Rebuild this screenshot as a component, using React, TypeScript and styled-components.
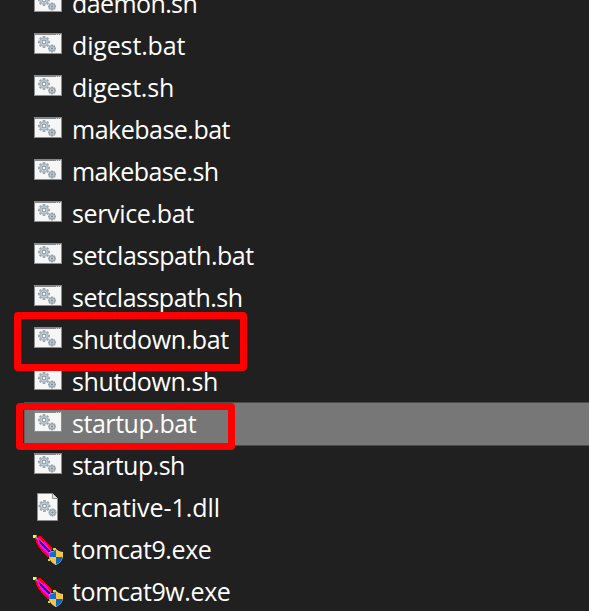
import React from "react";
import styled, { createGlobalStyle } from "styled-components";

const GlobalStyle = createGlobalStyle`
  html, body { margin: 0; padding: 0; background: #202020; overflow: hidden; }
`;

const Explorer = styled.main`
  position: relative;
  width: 589px;
  height: 611px;
  overflow: hidden;
  background: #202020;
  font-family: "Open Sans", "Noto Sans", sans-serif;
`;

const FileList = styled.ul`
  list-style: none;
  margin: -17px 0 0;
  padding: 0 0 0 24px;
`;

const FileRow = styled.li<{ $selected?: boolean }>`
  box-sizing: border-box;
  display: flex;
  align-items: flex-start;
  gap: 10px;
  height: 42px;
  padding-left: 10px;
  background: ${(p) => (p.$selected ? "#777777" : "transparent")};
  box-shadow: ${(p) => (p.$selected ? "0 -1px 0 #4b4b4b, 0 1px 0 #4b4b4b, inset 1px 0 0 #606060" : "none")};
`;

const IconSlot = styled.span`
  flex: none;
  width: 28px;
  height: 28px;
  margin-top: 6px;
  svg { display: block; overflow: visible; }
`;

const FileName = styled.span<{ $tracking: number }>`
  color: #ffffff;
  font-size: 25px;
  line-height: 40px;
  letter-spacing: ${(p) => p.$tracking}px;
  white-space: nowrap;
`;

const Marker = styled.div<{ $x: number; $y: number; $w: number; $h: number }>`
  position: absolute;
  box-sizing: border-box;
  left: ${(p) => p.$x}px;
  top: ${(p) => p.$y}px;
  width: ${(p) => p.$w}px;
  height: ${(p) => p.$h}px;
  border: 7px solid #ff0000;
  border-radius: 4px;
`;

type IconKind = "script" | "library" | "tomcat";

function Gears({ x, y }: { x: number; y: number }) {
  return (
    <g transform={`translate(${x} ${y})`}>
      <path d="M0-6V6M-6 0H6M-4.2-4.2L4.2 4.2M4.2-4.2L-4.2 4.2" stroke="#9aa5ac" strokeWidth="2.6" />
      <circle r="4" fill="#c8d6df" stroke="#a9b6be" strokeWidth="1.2" />
      <circle r="1.9" fill="#fafafa" stroke="#89959d" strokeWidth="1.1" />
      <g transform="translate(8 6.5)">
        <path d="M0-4V4M-4 0H4M-2.8-2.8L2.8 2.8M2.8-2.8L-2.8 2.8" stroke="#949fa6" strokeWidth="2" />
        <circle r="2.6" fill="#c6d2da" stroke="#98a5ad" strokeWidth="1" />
        <circle r="1.1" fill="#7d8991" />
      </g>
    </g>
  );
}

function ScriptIcon() {
  return (
    <svg width="28" height="28" viewBox="0 0 28 28">
      <rect x="0.5" y="2.5" width="27" height="20" fill="#f6f6f7" stroke="#8b8e90" />
      <rect x="0" y="2" width="28" height="2" fill="#85888a" />
      <path d="M22 3.5h1M24 3.5h1M26 3.5h1" stroke="#d4d4d4" />
      <Gears x={10} y={11} />
    </svg>
  );
}

function LibraryIcon() {
  return (
    <svg width="28" height="28" viewBox="0 0 28 28">
      <path d="M3.5 .5H18.5L23.5 5.5V27.5H3.5Z" fill="#f7f7f8" stroke="#8b8e90" />
      <path d="M18.5 .5V5.5H23.5" fill="#e5e5e5" stroke="#8b8e90" />
      <Gears x={10.5} y={13} />
    </svg>
  );
}

function TomcatIcon() {
  return (
    <svg width="28" height="28" viewBox="0 0 28 28" shapeRendering="crispEdges">
      <path d="M1 2H4V1H6L10 5L14 9L18 13V22H14L11 20L7 15L4 11L2 7Z" fill="#ff0000" />
      <path d="M3 3H5L10 7L14 11L17 15V20H14L10 16L6 11L4 8Z" fill="#ff00ff" />
      <path d="M5 5H6L8 8L11 10L13 13L16 15V17H14L12 15L10 13L8 11L6 8Z" fill="#000080" />
      <path d="M-1 0H2V3H-1Z" fill="#ffff00" />
      <path d="M2 0H3V3H4V4H2V3H1V2H2Z" fill="#8b9190" />
      <path d="M17 15H25V16H17ZM14 22H18V26H14Z" fill="#080808" />
      <path d="M19 13H22V15H19ZM14 24H16V26H14ZM16 21H18V23H16Z" fill="#d9df00" />
      <g shapeRendering="auto">
        <path d="M22 14C20 16 17 17 15 17V21C15 25 18 28 22 30C26 28 29 25 29 21V17C27 17 24 16 22 14Z" fill="#d8d2b8" />
        <path d="M22 14.6C20 16.6 18 17.3 15.3 17.5V22H22Z" fill="#0872d4" />
        <path d="M22 14.6C24 16.6 26 17.3 28.7 17.5V22H22Z" fill="#ffc23d" />
        <path d="M15.3 22H22V29.6C18.5 27.6 15.6 25 15.3 22Z" fill="#ffc23d" />
        <path d="M22 22H28.7C28.4 25 25.5 27.6 22 29.6Z" fill="#0868be" />
      </g>
    </svg>
  );
}

const icons: Record<IconKind, () => React.JSX.Element> = {
  script: ScriptIcon,
  library: LibraryIcon,
  tomcat: TomcatIcon,
};

interface FileEntry {
  name: string;
  kind: IconKind;
  tracking: number;
  selected?: boolean;
}

const files: FileEntry[] = [
  { name: "daemon.sh", kind: "script", tracking: -0.6 },
  { name: "digest.bat", kind: "script", tracking: -0.15 },
  { name: "digest.sh", kind: "script", tracking: -0.2 },
  { name: "makebase.bat", kind: "script", tracking: -0.5 },
  { name: "makebase.sh", kind: "script", tracking: -0.6 },
  { name: "service.bat", kind: "script", tracking: -0.35 },
  { name: "setclasspath.bat", kind: "script", tracking: -0.45 },
  { name: "setclasspath.sh", kind: "script", tracking: -0.5 },
  { name: "shutdown.bat", kind: "script", tracking: -0.36 },
  { name: "shutdown.sh", kind: "script", tracking: -0.4 },
  { name: "startup.bat", kind: "script", tracking: -0.45, selected: true },
  { name: "startup.sh", kind: "script", tracking: -0.55 },
  { name: "tcnative-1.dll", kind: "library", tracking: -0.05 },
  { name: "tomcat9.exe", kind: "tomcat", tracking: -0.4 },
  { name: "tomcat9w.exe", kind: "tomcat", tracking: -0.4 },
];

export default function App() {
  return (
    <>
      <GlobalStyle />
      <Explorer>
        <FileList>
          {files.map((file) => {
            const Icon = icons[file.kind];
            return (
              <FileRow key={file.name} $selected={file.selected}>
                <IconSlot><Icon /></IconSlot>
                <FileName $tracking={file.tracking}>{file.name}</FileName>
              </FileRow>
            );
          })}
        </FileList>
        <Marker $x={14} $y={312} $w={233} $h={59} />
        <Marker $x={16} $y={403} $w={219} $h={47} />
      </Explorer>
    </>
  );
}
